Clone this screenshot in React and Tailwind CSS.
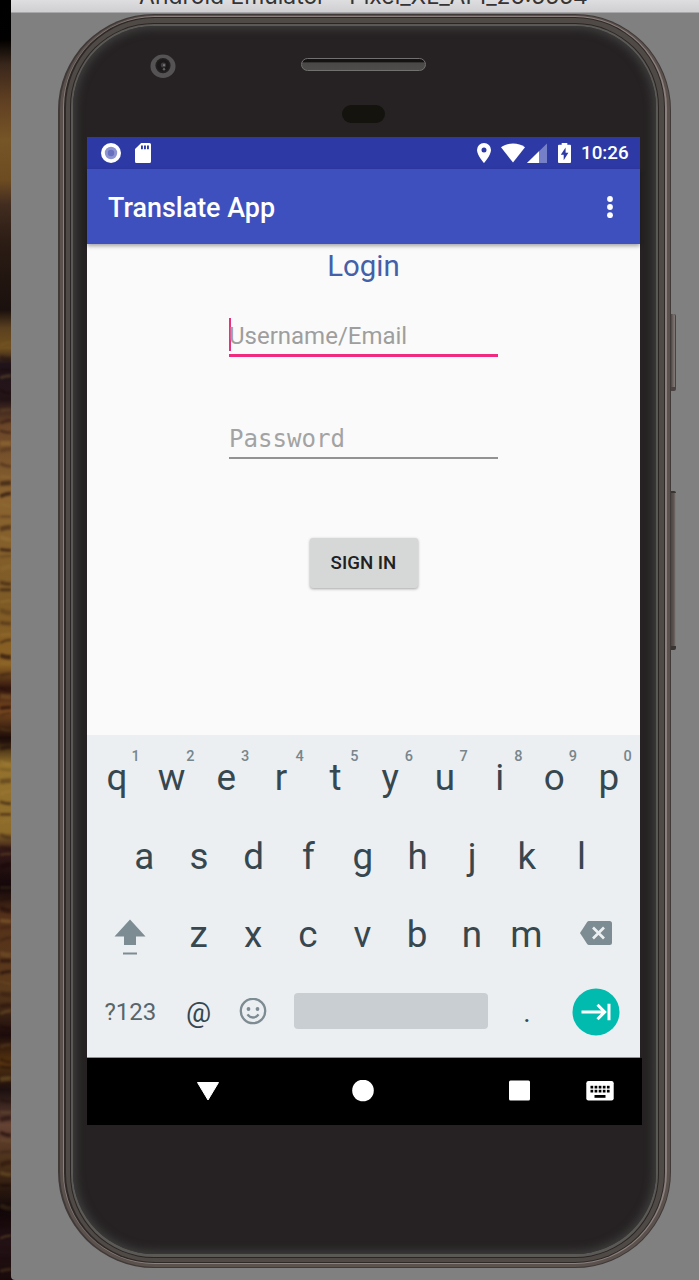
import React from "react";

const topRow = [
  ["q", "1"], ["w", "2"], ["e", "3"], ["r", "4"], ["t", "5"],
  ["y", "6"], ["u", "7"], ["i", "8"], ["o", "9"], ["p", "0"],
];
const middleRow = ["a", "s", "d", "f", "g", "h", "j", "k", "l"];
const bottomRow = ["z", "x", "c", "v", "b", "n", "m"];

const grain = Array.from({ length: 88 }, (_, i) => ({
  y: 345 + i * 10.6 + ((i * 7) % 5),
  slope: ((i * 5) % 7) - 3,
  w: 2 + ((i * 3) % 4) * 0.9,
  o: 0.16 + ((i * 11) % 5) * 0.07,
}));

function Wallpaper() {
  return (
    <div className="h-full w-[11px] shrink-0 overflow-hidden bg-[linear-gradient(180deg,#000_0px,#020100_40px,#3a271c_65px,#5f3f22_100px,#765527_140px,#6d4c22_180px,#422c20_205px,#2c1d15_240px,#1a100d_310px,#5b4020_328px,#70501f_348px,#20141a_364px,#241518_400px,#6a4528_425px,#8a6330_500px,#7d5a26_600px,#8a6024_665px,#32160e_688px,#7a4a20_710px,#1c0c08_738px,#94722e_765px,#8c6a2a_832px,#341a18_850px,#120709_888px,#54301a_915px,#5a3a1c_990px,#1c0c0c_1035px,#55330f_1062px,#1c1010_1090px,#644234_1125px,#4a3018_1165px,#100608_1210px,#241216_1245px,#180a0a_1280px)]">
      <svg className="blur-[0.8px]" width="11" height="1280" viewBox="0 0 11 1280">
        {grain.map((g, i) => (
          <path
            key={i}
            d={`M0 ${g.y} Q6 ${g.y + g.slope} 11 ${g.y + g.slope}`}
            stroke={i % 3 === 0 ? "#b08a42" : "#1a0708"}
            strokeWidth={g.w}
            strokeOpacity={i % 3 === 0 ? g.o * 0.7 : g.o * 1.4}
            fill="none"
          />
        ))}
      </svg>
    </div>
  );
}

function PhoneTop() {
  return (
    <div className="flex h-[123px] flex-col">
      <div className="flex items-center pt-[40px] pl-[63px]">
        <svg width="26" height="25" viewBox="0 0 26 25">
          <ellipse cx="13" cy="12.3" rx="12.5" ry="11.7" fill="#555353" />
          <circle cx="13" cy="11.6" r="7.6" fill="#232020" />
          <circle cx="13" cy="11.6" r="6" fill="#1b1919" />
          <circle cx="13.4" cy="11" r="2.6" fill="#3e3e40" />
          <circle cx="14" cy="11.2" r="1.1" fill="#77777a" />
          <circle cx="14" cy="15.2" r="1.2" fill="#606063" />
        </svg>
        <div className="ml-[125px] h-[13px] w-[125px] -translate-y-[2px] rounded-full border-[1.5px] border-[#73716f] bg-[linear-gradient(180deg,#141212_0%,#141212_28%,#4b4947_34%,#4e4c4a_100%)]" />
      </div>
      <div className="mt-[26px] ml-[255px] h-[18px] w-[43px] rounded-full bg-[#14130e]" />
    </div>
  );
}

function StatusBar() {
  return (
    <div className="flex h-[31.5px] items-center bg-[#2d3aa5] pr-[12px] pl-[14px] text-white">
      <svg width="20" height="20" viewBox="0 0 20 20">
        <circle cx="10" cy="10" r="10" fill="#fff" />
        <circle cx="10" cy="10" r="6.2" fill="#8d94d0" />
        <circle cx="10" cy="10" r="3.2" fill="#6670c0" />
      </svg>
      <svg className="ml-[14px]" width="16" height="20" viewBox="0 0 16 20">
        <path fillRule="evenodd" fill="#fff" d="M6.2 0H14.5Q16 0 16 1.5V18.5Q16 20 14.5 20H1.5Q0 20 0 18.5V6ZM6 2.4V6.2H7.9V2.4ZM9 2.4V6.2H10.9V2.4ZM12 2.4V6.2H13.9V2.4Z" />
      </svg>
      <svg className="ml-auto" width="14" height="20" viewBox="0 0 14 20">
        <path fillRule="evenodd" fill="#fff" d="M7 0A7 7 0 0 0 0 7C0 12.2 7 20 7 20S14 12.2 14 7A7 7 0 0 0 7 0ZM7 4.5A2.5 2.5 0 1 1 7 9.5A2.5 2.5 0 1 1 7 4.5Z" />
      </svg>
      <svg className="ml-[10px]" width="24" height="20" viewBox="0 0 24 20">
        <path fill="#fff" d="M12 19.5L0 4.2C3.3 1.8 7.4 0.5 12 0.5S20.7 1.8 24 4.2Z" />
      </svg>
      <svg className="ml-[2px]" width="20" height="20" viewBox="0 0 20 20">
        <path fill="#7680c8" d="M0 20L20 0.5V20Z" />
        <path fill="#fff" d="M0 20L12 8.3V20Z" />
      </svg>
      <svg className="ml-[11px]" width="13" height="20" viewBox="0 0 13 20">
        <path fill="#fff" d="M3.7 0H9.3V1.8H12Q13 1.8 13 2.8V19Q13 20 12 20H1Q0 20 0 19V2.8Q0 1.8 1 1.8H3.7Z" />
        <path fill="#2d3aa5" d="M7.6 4.5L2.8 11.8H5.7V17.3L10.4 9.8H7.6Z" />
      </svg>
      <span className="ml-[10px] w-[47px] pt-px text-[18.8px] leading-none font-medium whitespace-nowrap">10:26</span>
    </div>
  );
}

function AppBar() {
  return (
    <div className="z-10 flex h-[75.5px] items-center justify-between bg-[#3e50be] pt-px pr-[27px] pl-[21px] shadow-[0_2px_4px_rgba(0,0,0,0.35)]">
      <h1 className="pt-[3px] text-[26.9px] leading-none font-medium whitespace-nowrap text-white">Translate App</h1>
      <svg width="6" height="22" viewBox="0 0 6 22" fill="#fff">
        <circle cx="3" cy="3" r="2.9" />
        <circle cx="3" cy="11" r="2.9" />
        <circle cx="3" cy="19.2" r="2.9" />
      </svg>
    </div>
  );
}

function LoginForm() {
  return (
    <div className="flex h-[491px] flex-col items-center bg-[#fafafa]">
      <h2 className="flex h-[44px] items-center pt-[2px] text-[29.4px] leading-none text-[#4460a8]">Login</h2>
      <div className="mt-[30px] flex h-[39px] w-[269px] border-b-[3px] border-[#f02a7e]">
        <div className="-mr-[2px] h-[33px] w-[2px] bg-[#e8307e]" />
        <span className="pt-px text-[24px] leading-[34px] whitespace-nowrap text-[#9e9e9e]">Username/Email</span>
      </div>
      <div className="mt-[64px] flex h-[37.5px] w-[269px] border-b-2 border-[#929292]">
        <span className="pt-px font-['DejaVu_Sans_Mono',monospace] text-[24.1px] leading-[34px] whitespace-nowrap text-[#a3a3a3]">Password</span>
      </div>
      <button className="mt-[79px] h-[50px] w-[108px] rounded-[3px] bg-[#d6d8d7] pt-px text-[18.7px] leading-none font-medium whitespace-nowrap text-[#212121] shadow-[0_1px_3px_rgba(0,0,0,0.35)]">
        SIGN IN
      </button>
    </div>
  );
}

function Key({ label }) {
  return <div className="flex w-[54.67px] shrink-0 items-center justify-center pt-[2px] text-[36.8px] leading-none">{label}</div>;
}

function Keyboard() {
  return (
    <div className="flex h-[323px] flex-col border-b border-[#8c9498] bg-[#ebeff2] pt-[3.5px] text-[#37474f]">
      <div className="flex h-[78.3px] pl-[2.7px]">
        {topRow.map(([letter, digit]) => (
          <div key={letter} className="relative flex">
            <Key label={letter} />
            <span className="absolute top-[9.5px] left-[36px] w-[20px] text-center text-[14.5px] leading-[17px] font-medium text-[#78868c]">{digit}</span>
          </div>
        ))}
      </div>
      <div className="flex h-[78.3px] pl-[30px]">
        {middleRow.map((k) => <Key key={k} label={k} />)}
      </div>
      <div className="flex h-[78.3px] pl-[2.5px]">
        <div className="flex w-[81.7px] items-center justify-center pt-[4px]">
          <svg width="32" height="37" viewBox="0 0 32 37" fill="#7d8b92">
            <path d="M16 1.5L31.5 18.5H22V27H10V18.5H0.5Z" />
            <rect x="9" y="34.5" width="14" height="2" />
          </svg>
        </div>
        {bottomRow.map((k) => <Key key={k} label={k} />)}
        <div className="flex w-[84px] items-center justify-center">
          <svg className="-translate-y-[1.5px]" width="32" height="25" viewBox="0 0 32 25">
            <path fill="#7d8b92" d="M9 0.5H29.5Q32 0.5 32 3V22Q32 24.5 29.5 24.5H9Q7.8 24.5 7 23.3L0 12.5L7 1.7Q7.8 0.5 9 0.5Z" />
            <path d="M13 7L24 18M24 7L13 18" stroke="#ebeff2" strokeWidth="2.7" />
          </svg>
        </div>
      </div>
      <div className="flex h-[76.3px] items-center pl-[2.5px]">
        <div className="w-[81.7px] text-center text-[24px] leading-none text-[#56666d]">?123</div>
        <div className="flex w-[54.67px] justify-center pt-[2px] text-[28px] leading-none">@</div>
        <div className="flex w-[54.67px] justify-center">
          <svg width="28" height="28" viewBox="0 0 28 28" fill="none" stroke="#7d8b92" strokeWidth="2.3">
            <circle cx="14" cy="13" r="12.2" />
            <circle cx="9.5" cy="11" r="1.9" fill="#7d8b92" stroke="none" />
            <circle cx="18.5" cy="11" r="1.9" fill="#7d8b92" stroke="none" />
            <path d="M8.5 16.3Q10.5 19.5 14 19.5T19.5 16.3" />
          </svg>
        </div>
        <div className="ml-[13px] h-[36px] w-[194px] -translate-y-[1px] rounded-[4px] bg-[#c9ced2]" />
        <div className="ml-[12px] flex w-[54.67px] justify-center pt-[2px] text-[28px] leading-none">.</div>
        <div className="flex w-[83px] justify-center">
          <svg width="48" height="48" viewBox="0 0 48 48">
            <circle cx="24" cy="24" r="23.5" fill="#00bbae" />
            <path d="M9.5 24H32M25.5 16.8L32.7 24L25.5 31.2M37 15.7V32.3" fill="none" stroke="#fff" strokeWidth="3" />
          </svg>
        </div>
      </div>
    </div>
  );
}

function NavBar() {
  return (
    <div className="flex h-[66.5px] w-[554.5px] items-center bg-black pl-[109px]">
      <svg width="24" height="20" viewBox="0 0 24 20">
        <path d="M1.5 1.5H22.5L12 19Z" fill="#fff" stroke="#fff" strokeLinejoin="round" />
      </svg>
      <svg className="ml-[132px]" width="22" height="22" viewBox="0 0 22 22">
        <circle cx="11" cy="10.5" r="10.8" fill="#fff" />
      </svg>
      <div className="ml-[135px] h-[20px] w-[20.5px] -translate-y-[0.5px] rounded-[1.5px] bg-white" />
      <svg className="ml-[56px]" width="28" height="20" viewBox="0 0 28 20">
        <rect x="0.3" y="0" width="27.4" height="19.5" rx="2.2" fill="#fff" />
        <g fill="#000">
          {[0, 1, 2, 3, 4].map((i) => (
            <React.Fragment key={i}>
              <rect x={4.5 + i * 4.1} y="4.8" width="2.7" height="2.7" />
              <rect x={4.5 + i * 4.1} y="8.8" width="2.7" height="2.7" />
            </React.Fragment>
          ))}
          <rect x="8.5" y="14" width="11" height="2.8" />
        </g>
      </svg>
    </div>
  );
}

export default function App() {
  return (
    <div className="flex h-[1280px] w-[699px] overflow-hidden bg-[#0e0808] font-[Roboto,sans-serif]">
      <Wallpaper />
      <div className="flex min-w-0 flex-1 flex-col rounded-bl-[4px] bg-[#808080]">
        <div className="h-[12.5px] shrink-0 overflow-hidden border-b border-[#a8a8aa] bg-[linear-gradient(180deg,#dedee0,#cfcfd2)]">
          <div className="-mt-[16px] ml-[128px] w-[449px] text-center font-[Inter,sans-serif] text-[22.9px] leading-[24px] whitespace-nowrap text-[#343436]">
            Android Emulator - Pixel_XL_API_26:5554
          </div>
        </div>
        <div className="flex pt-[1.5px] pl-[47px]">
          <div className="h-[1254px] w-[613px] shrink-0 rounded-[96px] bg-[#3f3937] px-[1.5px] py-px">
            <div className="h-full rounded-[95px] bg-[#5b524e] px-[3px] pt-px pb-[3px]">
              <div className="h-full rounded-[92px] bg-[#8b807d] px-[1.5px] py-px">
                <div className="h-full rounded-[90px] bg-[#2e2927] px-[1.5px] py-px">
                  <div className="h-full rounded-[89px] bg-[#504a46] px-[4.5px] pt-[5px] pb-[4px]">
                    <div className="h-full rounded-[84px] bg-[#2a2625] p-px">
                      <div className="h-full rounded-[83px] bg-[#5b5956] px-[2px] pt-[2px] pb-[3px]">
                        <div className="flex h-full flex-col rounded-[81px] bg-[#262223] px-[14px] shadow-[inset_0_0_9px_3px_#3f3e3d]">
                          <div className="-mt-[12px] flex flex-col">
                            <PhoneTop />
                            <div className="flex w-[553px] flex-col">
                              <StatusBar />
                              <AppBar />
                              <LoginForm />
                              <Keyboard />
                              <NavBar />
                            </div>
                          </div>
                        </div>
                      </div>
                    </div>
                  </div>
                </div>
              </div>
            </div>
          </div>
          <div className="flex w-[5px] flex-col pt-[300px]">
            <div className="h-[77px] rounded-r-[2px] border-r border-b-4 border-[#4a4341] bg-[linear-gradient(90deg,#4c4542,#6d6561_50%,#837b77)]" />
            <div className="mt-[100px] h-[159px] rounded-r-[2px] border-t-2 border-b-4 border-[#3a3432] bg-[linear-gradient(90deg,#4c4542,#5f5752_60%,#8a827e)]" />
          </div>
        </div>
      </div>
    </div>
  );
}
